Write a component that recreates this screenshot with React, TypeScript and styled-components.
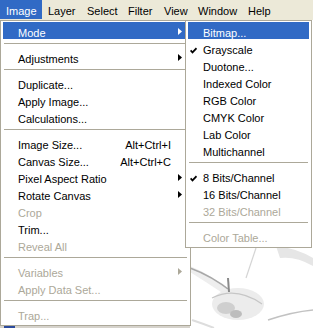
import React from 'react';
import styled, { createGlobalStyle } from 'styled-components';

const MENU_BLUE = '#316AC5';
const BAR_BG = '#ECE9D8';
const BORDER = '#ACA899';
const DISABLED = '#ACA899';

interface Entry {
  label: string;
  shortcut?: string;
  arrow?: boolean;
  disabled?: boolean;
  active?: boolean;
  checked?: boolean;
}

type Line = Entry | '-';

const barItems = [
  { label: 'Image', width: 42, active: true },
  { label: 'Layer', width: 39 },
  { label: 'Select', width: 41 },
  { label: 'Filter', width: 36 },
  { label: 'View', width: 34 },
  { label: 'Window', width: 50 },
  { label: 'Help', width: 40 },
];

const imageMenu: Line[] = [
  { label: 'Mode', arrow: true, active: true },
  '-',
  { label: 'Adjustments', arrow: true },
  '-',
  { label: 'Duplicate...' },
  { label: 'Apply Image...' },
  { label: 'Calculations...' },
  '-',
  { label: 'Image Size...', shortcut: 'Alt+Ctrl+I' },
  { label: 'Canvas Size...', shortcut: 'Alt+Ctrl+C' },
  { label: 'Pixel Aspect Ratio', arrow: true },
  { label: 'Rotate Canvas', arrow: true },
  { label: 'Crop', disabled: true },
  { label: 'Trim...' },
  { label: 'Reveal All', disabled: true },
  '-',
  { label: 'Variables', arrow: true, disabled: true },
  { label: 'Apply Data Set...', disabled: true },
  '-',
  { label: 'Trap...', disabled: true },
];

const modeMenu: Line[] = [
  { label: 'Bitmap...', active: true },
  { label: 'Grayscale', checked: true },
  { label: 'Duotone...' },
  { label: 'Indexed Color' },
  { label: 'RGB Color' },
  { label: 'CMYK Color' },
  { label: 'Lab Color' },
  { label: 'Multichannel' },
  '-',
  { label: '8 Bits/Channel', checked: true },
  { label: '16 Bits/Channel' },
  { label: '32 Bits/Channel', disabled: true },
  '-',
  { label: 'Color Table...', disabled: true },
];

const CheckIcon = () => (
  <svg width="7" height="7" viewBox="0 0 7 7">
    <path d="M0.6 3.4 L2.5 5.4 L6.5 1.2" fill="none" stroke="currentColor" strokeWidth="1.7" />
  </svg>
);

const ArrowIcon = () => (
  <svg width="4" height="7" viewBox="0 0 4 7">
    <path d="M0 0 L4 3.5 L0 7 Z" fill="currentColor" />
  </svg>
);

const MenuList = ({ lines }: { lines: Line[] }) => (
  <>
    {lines.map((line, i) =>
      line === '-' ? (
        <Separator key={i} />
      ) : (
        <Row key={i} $active={line.active} $disabled={line.disabled}>
          <CheckCell>{line.checked && <CheckIcon />}</CheckCell>
          <Label>{line.label}</Label>
          <Shortcut>{line.shortcut}</Shortcut>
          <ArrowCell>{line.arrow && <ArrowIcon />}</ArrowCell>
        </Row>
      ),
    )}
  </>
);

const App = () => (
  <Screen>
    <GlobalStyle />
    <MenuBar>
      {barItems.map((item) => (
        <BarItem key={item.label} $width={item.width} $active={item.active}>
          {item.label}
        </BarItem>
      ))}
    </MenuBar>
    <Workspace>
      <Photo viewBox="0 0 313 308">
        <rect x="0" y="305" width="190" height="3" fill="#d6d3cc" />
        <rect x="4" y="306" width="11" height="2" fill="#2b4a9c" />
        <path d="M276 226 Q296 228 313 238 L313 246 Q296 236 280 238 Z" fill="#e6e6e6" />
        <path d="M256 228 Q252 240 246 258" fill="none" stroke="#d4d4d4" strokeWidth="1.2" />
        <path d="M190 246 Q210 254 232 272 L224 274 Q206 262 190 252 Z" fill="#eeeeee" />
        <path d="M190 248 Q212 256 232 272" fill="none" stroke="#a8a8a8" strokeWidth="1.4" />
        <ellipse cx="238" cy="284" rx="26" ry="16" fill="#ececec" />
        <path d="M212 278 Q236 266 262 284" fill="none" stroke="#c6c6c6" strokeWidth="1.2" />
        <ellipse cx="226" cy="288" rx="9" ry="6" fill="#cfcfcf" />
        <ellipse cx="236" cy="294" rx="6" ry="4" fill="#bdbdbd" />
        <path d="M228 258 L229 272" stroke="#8a8a8a" strokeWidth="2" />
        <path d="M268 300 Q292 292 313 290" fill="none" stroke="#c2c2c2" strokeWidth="1.5" />
        <path d="M192 300 Q204 304 214 308" fill="none" stroke="#dddddd" strokeWidth="2" />
      </Photo>
      <Dropdown $left={0} $width={191}>
        <MenuList lines={imageMenu} />
      </Dropdown>
      <Dropdown $left={185} $width={127}>
        <MenuList lines={modeMenu} />
      </Dropdown>
    </Workspace>
  </Screen>
);

export default App;

const GlobalStyle = createGlobalStyle`
  html, body {
    margin: 0;
    padding: 0;
    background: #fff;
  }
  body {
    font-family: Tahoma, "Liberation Sans", Arial, sans-serif;
    font-size: 11px;
  }
`;

const Screen = styled.div`
  width: 313px;
  height: 328px;
  display: flex;
  flex-direction: column;
  overflow: hidden;
`;

const MenuBar = styled.div`
  flex: none;
  height: 20px;
  display: flex;
  background: ${BAR_BG};
`;

const BarItem = styled.div<{ $width: number; $active?: boolean }>`
  flex: none;
  width: ${({ $width }) => $width}px;
  height: 19px;
  box-sizing: border-box;
  padding: 5px 0 0 6px;
  line-height: 12px;
  white-space: nowrap;
  color: ${({ $active }) => ($active ? '#fff' : '#000')};
  background: ${({ $active }) => ($active ? MENU_BLUE : 'transparent')};
`;

const Workspace = styled.div`
  flex: 1;
  position: relative;
  background: #fff;
  overflow: hidden;
`;

const Photo = styled.svg`
  display: block;
  width: 313px;
  height: 308px;
`;

const Dropdown = styled.div<{ $left: number; $width: number }>`
  position: absolute;
  top: 0;
  left: ${({ $left }) => $left}px;
  width: ${({ $width }) => $width}px;
  box-sizing: border-box;
  padding: 1px 2px 3px;
  background: #fff;
  border: 1px solid ${BORDER};
`;

const Row = styled.div<{ $active?: boolean; $disabled?: boolean }>`
  display: grid;
  grid-template-columns: 15px 1fr auto 17px;
  height: 17px;
  white-space: nowrap;
  color: ${({ $active, $disabled }) => ($active ? '#fff' : $disabled ? DISABLED : '#000')};
  background: ${({ $active }) => ($active ? MENU_BLUE : 'transparent')};
`;

const CheckCell = styled.div`
  padding: 8px 0 0 2px;
  line-height: 0;
`;

const Label = styled.div`
  padding-top: 5px;
  line-height: 12px;
`;

const Shortcut = styled.div`
  padding-top: 5px;
  line-height: 12px;
  text-align: right;
`;

const ArrowCell = styled.div`
  padding: 6px 0 0 7px;
  line-height: 0;
`;

const Separator = styled.div`
  height: 1px;
  margin: 4px 1px;
  background: ${BORDER};
`;
